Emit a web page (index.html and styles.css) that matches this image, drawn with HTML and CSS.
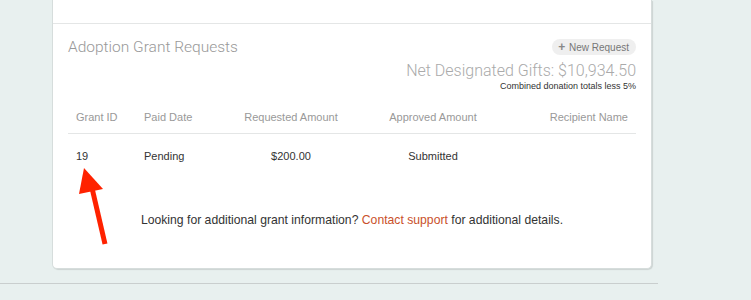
FILE: index.html
```html
<!DOCTYPE html>
<html lang="en">
<head>
    <meta charset="UTF-8">
    <meta name="viewport" content="width=device-width, initial-scale=1.0">
    <title>Adoption Grant Requests</title>
    <link rel="stylesheet" href="styles.css">
</head>
<body>
    <div class="page">
        <div class="card">
            <div class="card-top"></div>

            <section class="grants">
                <div class="grants-head">
                    <h2>Adoption Grant Requests</h2>
                    <div class="totals">
                        <button class="new-request"><span class="plus">+</span> New Request</button>
                        <div class="net-gifts">Net Designated Gifts: $10,934.50</div>
                        <div class="net-note">Combined donation totals less 5%</div>
                    </div>
                </div>

                <div class="grant-table">
                    <div class="row head">
                        <div class="c1">Grant ID</div>
                        <div class="c2">Paid Date</div>
                        <div class="c3">Requested Amount</div>
                        <div class="c4">Approved Amount</div>
                        <div class="c5">Recipient Name</div>
                    </div>
                    <div class="row">
                        <div class="c1">19</div>
                        <div class="c2">Pending</div>
                        <div class="c3">$200.00</div>
                        <div class="c4">Submitted</div>
                        <div class="c5"></div>
                    </div>
                </div>

                <p class="help">Looking for additional grant information? <a href="#">Contact support</a> for additional details.</p>
            </section>

            <!-- annotation arrow -->
            <svg class="arrow" width="40" height="90" viewBox="0 0 40 90">
                <polygon points="10,0 5,26 29,21" fill="#ff2200"/>
                <line x1="18" y1="20" x2="31" y2="76" stroke="#ff2200" stroke-width="5"/>
            </svg>
        </div>
        <div class="page-rule"></div>
    </div>
</body>
</html>
```

FILE: styles.css
```css
* {
    margin: 0;
    padding: 0;
    box-sizing: border-box;
}

body {
    font-family: 'Liberation Sans', Arial, sans-serif;
    background-color: #e8f0ef;
    color: #333;
}

.page {
    width: 658px;
}

.card {
    position: relative;
    margin-left: 52px;
    width: 600px;
    background-color: #ffffff;
    border: 1px solid #d6dddc;
    border-top: none;
    border-radius: 0 0 5px 5px;
    box-shadow: 1px 1px 1px rgba(0, 0, 0, 0.12);
}

.card-top {
    height: 24px;
    border-bottom: 1px solid #e4e6e6;
}

.grants {
    padding: 12px 15px 40px 15px;
}

.grants-head {
    display: flex;
    justify-content: space-between;
    align-items: flex-start;
}

.grants-head h2 {
    font-family: 'Roboto', sans-serif;
    font-weight: 300;
    font-size: 15.5px;
    line-height: 20px;
    color: #999;
    margin-top: 1px;
}

.totals {
    display: flex;
    flex-direction: column;
    align-items: flex-end;
}

.new-request {
    font-family: 'Liberation Sans', Arial, sans-serif;
    font-size: 10px;
    line-height: 16px;
    height: 16px;
    padding: 0 7px 0 6px;
    border: none;
    border-radius: 8px;
    background-color: #efefef;
    color: #777;
    margin-top: 3px;
}

.plus {
    font-weight: bold;
    font-size: 12px;
    color: #888;
    margin-right: 1px;
}

.net-gifts {
    font-family: 'Roboto', sans-serif;
    font-weight: 300;
    font-size: 16px;
    line-height: 20px;
    color: #aaa;
    margin-top: 6px;
}

.net-note {
    font-size: 9px;
    line-height: 11px;
    color: #333;
}

.grant-table {
    margin-top: 9px;
}

.row {
    display: grid;
    grid-template-columns: 68px 94px 122px 162px 1fr;
    font-size: 11px;
    line-height: 14px;
}

.row > div {
    padding: 0 8px;
}

.row.head {
    color: #999;
    padding: 9px 0 9px;
    border-bottom: 1px solid #e4e6e6;
}

.row:not(.head) {
    padding: 15px 0 14px;
}

.c3, .c4 {
    text-align: center;
}

.c5 {
    text-align: right;
}

.help {
    margin-top: 35px;
    text-align: center;
    font-size: 12.2px;
    line-height: 16px;
    color: #333;
}

.help a {
    color: #c9502a;
    text-decoration: none;
}

.arrow {
    position: absolute;
    left: 21px;
    top: 168px;
}

.page-rule {
    margin-top: 14px;
    border-top: 1px solid #c9cece;
}
```
